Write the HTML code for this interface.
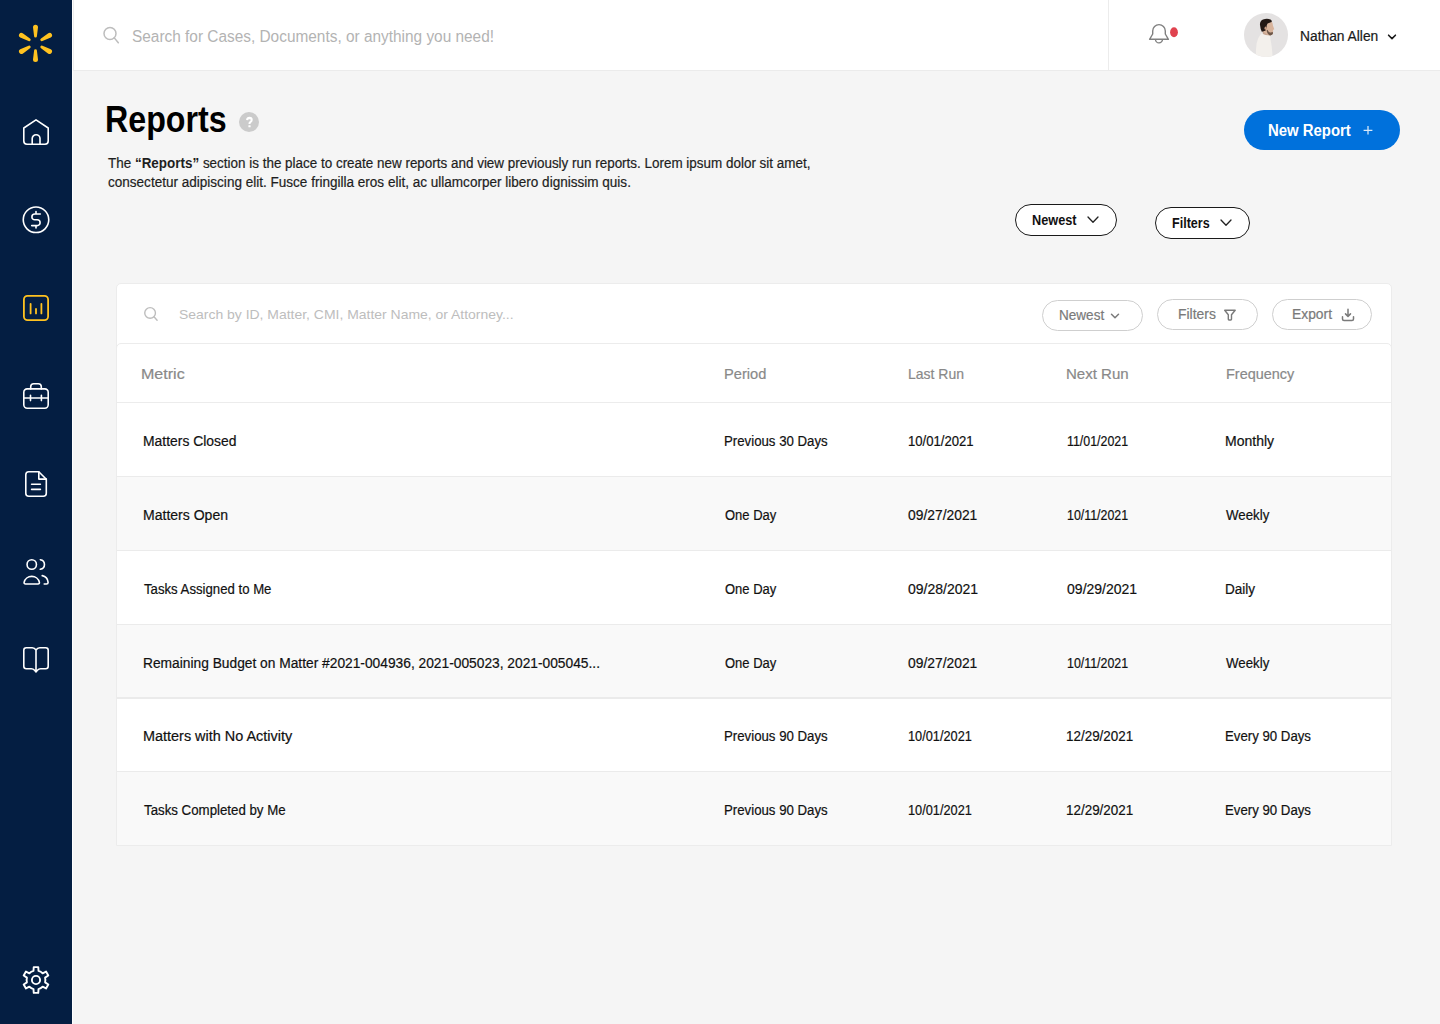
<!DOCTYPE html>
<html><head><meta charset="utf-8"><title>Reports</title>
<style>
*{margin:0;padding:0;box-sizing:border-box}
html,body{width:1440px;height:1024px;overflow:hidden}
body{background:#f5f5f5;font-family:"Liberation Sans",sans-serif;position:relative}
.t{position:absolute;white-space:nowrap;transform-origin:0 0;-webkit-text-stroke:0.2px currentColor}
.t b,.b7{-webkit-text-stroke:0}
.abs{position:absolute}
</style></head><body>
<div class="abs" style="left:0;top:0;width:72px;height:1024px;background:#041e42"></div>
<div class="abs" style="left:72px;top:0;width:1px;height:1024px;background:#fff"></div>
<div class="abs" style="left:73px;top:0;width:1px;height:70px;background:#ededed"></div>
<div class="abs" style="left:74px;top:0;width:1366px;height:70px;background:#fff"></div>
<div class="abs" style="left:73px;top:70px;width:1367px;height:1px;background:#ebebeb"></div>
<div class="abs" style="left:1108px;top:0;width:1px;height:70px;background:#ececec"></div>

<svg width="72" height="1024" style="position:absolute;left:0;top:0" viewBox="0 0 72 1024" fill="none">
 <g fill="#FFC220">
  <path transform="rotate(0 35.50 43.40)" d="M34.10,36.20 L33.00,27.20 A2.5,2.5 0 0 1 38.00,27.20 L36.90,36.20 A1.4,1.4 0 0 1 34.10,36.20 Z"/>
  <path transform="rotate(60 35.50 43.40)" d="M34.10,36.20 L33.00,27.20 A2.5,2.5 0 0 1 38.00,27.20 L36.90,36.20 A1.4,1.4 0 0 1 34.10,36.20 Z"/>
  <path transform="rotate(120 35.50 43.40)" d="M34.10,36.20 L33.00,27.20 A2.5,2.5 0 0 1 38.00,27.20 L36.90,36.20 A1.4,1.4 0 0 1 34.10,36.20 Z"/>
  <path transform="rotate(180 35.50 43.40)" d="M34.10,36.20 L33.00,27.20 A2.5,2.5 0 0 1 38.00,27.20 L36.90,36.20 A1.4,1.4 0 0 1 34.10,36.20 Z"/>
  <path transform="rotate(240 35.50 43.40)" d="M34.10,36.20 L33.00,27.20 A2.5,2.5 0 0 1 38.00,27.20 L36.90,36.20 A1.4,1.4 0 0 1 34.10,36.20 Z"/>
  <path transform="rotate(300 35.50 43.40)" d="M34.10,36.20 L33.00,27.20 A2.5,2.5 0 0 1 38.00,27.20 L36.90,36.20 A1.4,1.4 0 0 1 34.10,36.20 Z"/>
 </g>
 <g stroke="#FFFFFF" stroke-width="1.6" stroke-linecap="round" stroke-linejoin="round">
  <path d="M23.8,128 L36,119.9 L48.2,128 V141 Q48.2,144.2 45,144.2 H27 Q23.8,144.2 23.8,141 Z"/>
  <path d="M32.2,144.2 V138.6 A3.9,3.9 0 0 1 40,138.6 V144.2"/>
  <circle cx="36" cy="219.8" r="12.75"/>
  <path d="M40.3,214 H34.8 A2.9,2.9 0 0 0 34.8,219.8 H37.2 A2.9,2.9 0 0 1 37.2,225.6 H31.7 M36,211.6 V214 M36,225.6 V227.9"/>
 </g>
 <g stroke="#FFC220" stroke-width="1.8" stroke-linecap="round" stroke-linejoin="round">
  <rect x="23.9" y="295.9" width="24.2" height="24.2" rx="3.6"/>
  <path d="M30.6,303.8 V313.4 M36,309 V313.4 M41.4,303.8 V313.4"/>
 </g>
 <g stroke="#FFFFFF" stroke-width="1.6" stroke-linecap="round" stroke-linejoin="round">
  <rect x="23.8" y="388.9" width="24.4" height="19.3" rx="3.4"/>
  <path d="M30.7,388.9 V386.8 A3,3 0 0 1 33.7,383.8 H38.3 A3,3 0 0 1 41.3,386.8 V388.9"/>
  <path d="M23.8,398 H48.2 M30.5,395.3 V400.6 M41.4,395.3 V400.6"/>
  <path d="M38.8,471.8 H28.8 A3,3 0 0 0 25.8,474.8 V493.2 A3,3 0 0 0 28.8,496.2 H43.3 A3,3 0 0 0 46.3,493.2 V479.2 Z"/>
  <path d="M38.8,471.8 V479.1 H46.3 M31.6,484.3 H40.4 M31.6,489.4 H40.4"/>
  <circle cx="31.75" cy="564.5" r="4.7"/>
  <path d="M40.3,559.7 A4.85,4.85 0 0 1 40.3,569.3"/>
  <path d="M25.6,584 H38.0 Q39.6,584 39.4,582.3 A7.8,7.4 0 0 0 24.1,582.3 Q23.9,584 25.6,584 Z"/>
  <path d="M42.2,575.6 A7.2,7.6 0 0 1 48.1,582.4 Q48.1,584 46.4,584 H44.2"/>
  <path d="M36,650 Q34.6,647.8 32.2,647.8 H26.3 Q23.8,647.8 23.8,650.3 V666.3 Q23.8,668.8 26.3,668.8 H31.3 Q33.2,668.8 34.6,670.3 L36,671.9 L37.4,670.3 Q38.8,668.8 40.7,668.8 H45.7 Q48.2,668.8 48.2,666.3 V650.3 Q48.2,647.8 45.7,647.8 H39.8 Q37.4,647.8 36,650 Z M36,650 V671"/>
 </g>
 <g stroke="#FFFFFF" stroke-width="1.9" stroke-linecap="round" stroke-linejoin="round">
  <path d="M33.49,970.94 L33.73,967.10 L38.27,967.10 L38.51,970.94 A9.40,9.40 0 0 1 42.59,973.30 L46.04,971.58 L48.31,975.52 L45.10,977.65 A9.40,9.40 0 0 1 45.10,982.35 L48.31,984.48 L46.04,988.42 L42.59,986.70 A9.40,9.40 0 0 1 38.51,989.06 L38.27,992.90 L33.73,992.90 L33.49,989.06 A9.40,9.40 0 0 1 29.41,986.70 L25.96,988.42 L23.69,984.48 L26.90,982.35 A9.40,9.40 0 0 1 26.90,977.65 L23.69,975.52 L25.96,971.58 L29.41,973.30 A9.40,9.40 0 0 1 33.49,970.94 Z"/>
  <circle cx="36" cy="980" r="4.1"/>
 </g>
</svg>

<!-- header search icon -->
<svg class="abs" style="left:100px;top:25px" width="22" height="22" viewBox="0 0 22 22" fill="none" stroke="#bdbdbd" stroke-width="1.5" stroke-linecap="round">
 <circle cx="10" cy="8.5" r="6"/><path d="M14.3,12.9 L18.3,17.8"/>
</svg>
<!-- bell -->
<svg class="abs" style="left:1145px;top:20px" width="40" height="30" viewBox="1145 20 40 30" fill="none">
 <path d="M1152.7,34 V30.9 A6.3,6.3 0 0 1 1165.3,30.9 V34 L1168.4,39.3 H1149.6 Z" stroke="#808080" stroke-width="1.4" stroke-linejoin="round"/>
 <path d="M1155.5,39.4 A3.5,3.5 0 0 0 1162.5,39.4" stroke="#808080" stroke-width="1.4"/>
 <ellipse cx="1174" cy="32.2" rx="3.9" ry="5" fill="#e0434f"/>
</svg>
<!-- avatar -->
<svg class="abs" style="left:1244px;top:13px" width="44" height="44" viewBox="0 0 44 44">
 <defs><clipPath id="av"><circle cx="22" cy="22" r="22"/></clipPath></defs>
 <g clip-path="url(#av)">
  <rect width="44" height="44" fill="#e4e2e2"/>
  <path d="M17.6,20.2 Q21,21.8 25.6,22.6 Q26.6,24 26.4,26 Q28,33 28.6,44 H11.8 Q11.8,36 12.6,30.5 Q14,24 17.6,20.2 Z" fill="#f3f0ec"/>
  <path d="M18.2,17 L19,21 Q22,22.5 25,22.2 L24.5,19 Z" fill="#c7a591"/>
  <path d="M19.5,9 Q24,6.6 27.6,8.5 Q29,10.5 28.9,12.4 L30.3,16.3 L29,17 Q29.3,18.6 29,19.5 L29,21 Q27.5,22.6 25.5,22.4 Q21,21 19.5,18 Z" fill="#d8b49c"/>
  <path d="M16,12 Q15.6,8 19,6.4 Q23,5 26.5,6.4 Q28.2,7.3 27.6,9 Q25.5,9.6 23.6,10.4 Q22.4,12 22.6,14.6 L21.6,17.6 Q19.6,18.6 17.8,18.8 Q16.4,16 16,12 Z" fill="#231915"/>
  <path d="M22.6,17.6 Q23.4,21.6 26,22.4 Q28.6,22.4 29,20.6 L28.8,19 Q27,19.8 25.4,19.2 Q24,18.4 23.6,16.8 Z" fill="#5a463b" opacity="0.85"/>
  <ellipse cx="21.6" cy="15.2" rx="1.1" ry="1.6" fill="#c99d84"/>
 </g>
</svg>
<!-- name chevron -->
<svg class="abs" style="left:1386px;top:32px" width="12" height="10" viewBox="0 0 12 10" fill="none" stroke="#1a1a1a" stroke-width="1.6" stroke-linecap="round" stroke-linejoin="round">
 <path d="M2.6,3.2 L6,6.6 L9.4,3.2"/>
</svg>
<!-- help circle -->
<svg class="abs" style="left:239px;top:112px" width="20" height="20" viewBox="0 0 20 20"><circle cx="10" cy="10" r="10" fill="#cbcbcb"/><path d="M8.1,8.1 Q8.3,5.9 10.5,5.9 Q12.7,6 12.7,8 Q12.6,9.4 11.3,10.1 Q10.5,10.6 10.5,11.9" fill="none" stroke="#fff" stroke-width="2.1" stroke-linecap="butt"/><rect x="9.4" y="13.3" width="2.2" height="2" rx="0.3" fill="#fff"/></svg>
<!-- new report button -->
<div class="abs" style="left:1244px;top:110px;width:156px;height:40px;border-radius:20px;background:#0071dc"></div>
<svg class="abs" style="left:1360px;top:123px" width="16" height="16" viewBox="0 0 16 16" stroke="#fff" stroke-width="1.25" opacity="0.85">
 <path d="M8,2.9 V11.6 M3.6,7.25 H12.4"/>
</svg>
<!-- top pills -->
<div class="abs" style="left:1015px;top:204px;width:102px;height:32px;border-radius:16px;background:#fff;border:1.5px solid #1a1a1a"></div>
<svg class="abs" style="left:1085px;top:213px" width="16" height="14" viewBox="0 0 16 14" fill="none" stroke="#222" stroke-width="1.3" stroke-linecap="round" stroke-linejoin="round"><path d="M3,4 L8,9.3 L13,4"/></svg>
<div class="abs" style="left:1155px;top:207px;width:95px;height:32px;border-radius:16px;background:#fff;border:1.5px solid #1a1a1a"></div>
<svg class="abs" style="left:1218px;top:216px" width="16" height="14" viewBox="0 0 16 14" fill="none" stroke="#222" stroke-width="1.3" stroke-linecap="round" stroke-linejoin="round"><path d="M3,4 L8,9.3 L13,4"/></svg>
<!-- card search -->
<div class="abs" style="left:116px;top:283px;width:1276px;height:80px;border-radius:5px;background:#fff;border:1px solid #ececec"></div>
<svg class="abs" style="left:140px;top:303px" width="22" height="22" viewBox="0 0 22 22" fill="none" stroke="#bdbdbd" stroke-width="1.4" stroke-linecap="round">
 <circle cx="10.1" cy="9.95" r="5.35"/><path d="M14.2,14.1 L17.1,17.2"/>
</svg>
<div class="abs" style="left:1042px;top:300px;width:101px;height:31px;border-radius:16px;border:1px solid #cfcfcf"></div>
<svg class="abs" style="left:1107px;top:309px" width="16" height="14" viewBox="0 0 16 14" fill="none" stroke="#7a7a7a" stroke-width="1.5" stroke-linecap="round" stroke-linejoin="round"><path d="M4.5,5.3 L8,8.8 L11.5,5.3"/></svg>
<div class="abs" style="left:1157px;top:299px;width:101px;height:31px;border-radius:16px;border:1px solid #cfcfcf"></div>
<svg class="abs" style="left:1222px;top:307px" width="16" height="16" viewBox="0 0 16 16" fill="none" stroke="#7a7a7a" stroke-width="1.4" stroke-linejoin="round"><path d="M2.7,3.2 H13.2 L9.5,7.8 V12.3 Q9.5,13 8.8,13 H7 Q6.3,13 6.3,12.3 V7.8 Z"/></svg>
<div class="abs" style="left:1272px;top:299px;width:100px;height:31px;border-radius:16px;border:1px solid #cfcfcf"></div>
<svg class="abs" style="left:1340px;top:307px" width="16" height="16" viewBox="0 0 16 16" fill="none" stroke="#7a7a7a" stroke-width="1.5" stroke-linecap="round" stroke-linejoin="round"><path d="M8,2.3 V9.3 M5.5,6.9 L8,9.4 L10.5,6.9 M2.5,9.8 V12 A1.5,1.5 0 0 0 4,13.5 H12 A1.5,1.5 0 0 0 13.5,12 V9.8"/></svg>
<!-- table -->
<div class="abs" style="left:116px;top:343px;width:1276px;height:503px;border-radius:5px 5px 0 0;background:#fff;border:1px solid #ececec;overflow:hidden">
<div class="abs" style="left:0;top:58px;width:1274px;height:1px;background:#ececec"></div>
<div class="abs" style="left:0;top:59px;width:1274px;height:73px;background:#fff"></div>
<div class="abs" style="left:0;top:132px;width:1274px;height:1px;background:#ebebeb"></div>
<div class="abs" style="left:0;top:133px;width:1274px;height:73px;background:#f9f9f9"></div>
<div class="abs" style="left:0;top:206px;width:1274px;height:1px;background:#ebebeb"></div>
<div class="abs" style="left:0;top:207px;width:1274px;height:73px;background:#fff"></div>
<div class="abs" style="left:0;top:280px;width:1274px;height:1px;background:#ebebeb"></div>
<div class="abs" style="left:0;top:281px;width:1274px;height:73px;background:#f9f9f9"></div>
<div class="abs" style="left:0;top:353px;width:1274px;height:2px;background:#ebebeb"></div>
<div class="abs" style="left:0;top:355px;width:1274px;height:72px;background:#fff"></div>
<div class="abs" style="left:0;top:427px;width:1274px;height:1px;background:#ebebeb"></div>
<div class="abs" style="left:0;top:428px;width:1274px;height:73px;background:#f9f9f9"></div>
</div>
<div class="t b7" id="hsearch" style="left:132.04px;top:28.85px;font-size:16px;line-height:16px;font-weight:400;color:#b3b3b3;transform:scaleX(0.9623)">Search for Cases, Documents, or anything you need!</div>
<div class="t" id="hname" style="left:1300.04px;top:29.03px;font-size:14px;line-height:14px;font-weight:400;color:#1a1a1a;transform:scaleX(0.9860)">Nathan Allen</div>
<div class="t b7" id="title" style="left:104.50px;top:102.06px;font-size:36px;line-height:36px;font-weight:700;color:#000;transform:scaleX(0.8946)">Reports</div>
<div class="t" id="desc1" style="left:107.80px;top:156.19px;font-size:14px;line-height:14px;font-weight:400;color:#1e1e1e;transform:scaleX(0.9603)">The <b>“Reports”</b> section is the place to create new reports and view previously run reports. Lorem ipsum dolor sit amet,</div>
<div class="t" id="desc2" style="left:107.80px;top:174.78px;font-size:14px;line-height:14px;font-weight:400;color:#1e1e1e;transform:scaleX(0.9669)">consectetur adipiscing elit. Fusce fringilla eros elit, ac ullamcorper libero dignissim quis.</div>
<div class="t b7" id="newrep" style="left:1268.04px;top:122.90px;font-size:16px;line-height:16px;font-weight:700;color:#fff;transform:scaleX(0.9318)">New Report</div>
<div class="t b7" id="tnewest" style="left:1032.04px;top:212.74px;font-size:14px;line-height:14px;font-weight:700;color:#111;transform:scaleX(0.9086)">Newest</div>
<div class="t b7" id="tfilters" style="left:1172.04px;top:216.12px;font-size:14px;line-height:14px;font-weight:700;color:#111;transform:scaleX(0.8959)">Filters</div>
<div class="t b7" id="csearch" style="left:178.60px;top:308.18px;font-size:13px;line-height:13px;font-weight:400;color:#bdbdbd;transform:scaleX(1.0728)">Search by ID, Matter, CMI, Matter Name, or Attorney...</div>
<div class="t" id="cnewest" style="left:1058.60px;top:308.42px;font-size:14px;line-height:14px;font-weight:400;color:#7a7a7a;transform:scaleX(0.9679)">Newest</div>
<div class="t" id="cfilters" style="left:1177.60px;top:307.12px;font-size:14px;line-height:14px;font-weight:400;color:#7a7a7a;transform:scaleX(0.9938)">Filters</div>
<div class="t" id="cexport" style="left:1291.88px;top:306.53px;font-size:14px;line-height:14px;font-weight:400;color:#7a7a7a;transform:scaleX(0.9881)">Export</div>
<div class="t" id="th0" style="left:140.80px;top:366.00px;font-size:15px;line-height:15px;font-weight:400;color:#898989;transform:scaleX(1.0699)">Metric</div>
<div class="t" id="th1" style="left:723.88px;top:366.00px;font-size:15px;line-height:15px;font-weight:400;color:#898989;transform:scaleX(0.9762)">Period</div>
<div class="t" id="th2" style="left:908.00px;top:366.00px;font-size:15px;line-height:15px;font-weight:400;color:#898989;transform:scaleX(0.9320)">Last Run</div>
<div class="t" id="th3" style="left:1066.08px;top:366.00px;font-size:15px;line-height:15px;font-weight:400;color:#898989;transform:scaleX(1.0018)">Next Run</div>
<div class="t" id="th4" style="left:1225.80px;top:366.00px;font-size:15px;line-height:15px;font-weight:400;color:#898989;transform:scaleX(0.9641)">Frequency</div>
<div class="t" id="r0_0" style="left:142.80px;top:433.80px;font-size:14px;line-height:14px;font-weight:400;color:#111;transform:scaleX(0.9926)">Matters Closed</div>
<div class="t" id="r0_1" style="left:723.88px;top:433.80px;font-size:14px;line-height:14px;font-weight:400;color:#111;transform:scaleX(0.9450)">Previous 30 Days</div>
<div class="t" id="r0_2" style="left:907.80px;top:433.80px;font-size:14px;line-height:14px;font-weight:400;color:#111;transform:scaleX(0.9365)">10/01/2021</div>
<div class="t" id="r0_3" style="left:1066.88px;top:433.80px;font-size:14px;line-height:14px;font-weight:400;color:#111;transform:scaleX(0.8857)">11/01/2021</div>
<div class="t" id="r0_4" style="left:1225.04px;top:433.80px;font-size:14px;line-height:14px;font-weight:400;color:#111;transform:scaleX(1.0013)">Monthly</div>
<div class="t" id="r1_0" style="left:142.80px;top:507.80px;font-size:14px;line-height:14px;font-weight:400;color:#111;transform:scaleX(1.0025)">Matters Open</div>
<div class="t" id="r1_1" style="left:724.88px;top:507.80px;font-size:14px;line-height:14px;font-weight:400;color:#111;transform:scaleX(0.9276)">One Day</div>
<div class="t" id="r1_2" style="left:908.00px;top:507.80px;font-size:14px;line-height:14px;font-weight:400;color:#111;transform:scaleX(0.9887)">09/27/2021</div>
<div class="t" id="r1_3" style="left:1066.88px;top:507.80px;font-size:14px;line-height:14px;font-weight:400;color:#111;transform:scaleX(0.8857)">10/11/2021</div>
<div class="t" id="r1_4" style="left:1226.04px;top:507.80px;font-size:14px;line-height:14px;font-weight:400;color:#111;transform:scaleX(0.9483)">Weekly</div>
<div class="t" id="r2_0" style="left:143.80px;top:581.80px;font-size:14px;line-height:14px;font-weight:400;color:#111;transform:scaleX(0.9412)">Tasks Assigned to Me</div>
<div class="t" id="r2_1" style="left:724.88px;top:581.80px;font-size:14px;line-height:14px;font-weight:400;color:#111;transform:scaleX(0.9276)">One Day</div>
<div class="t" id="r2_2" style="left:908.00px;top:581.80px;font-size:14px;line-height:14px;font-weight:400;color:#111">09/28/2021</div>
<div class="t" id="r2_3" style="left:1067.08px;top:581.80px;font-size:14px;line-height:14px;font-weight:400;color:#111">09/29/2021</div>
<div class="t" id="r2_4" style="left:1225.04px;top:581.80px;font-size:14px;line-height:14px;font-weight:400;color:#111;transform:scaleX(0.9688)">Daily</div>
<div class="t" id="r3_0" style="left:142.80px;top:655.80px;font-size:14px;line-height:14px;font-weight:400;color:#111;transform:scaleX(0.9834)">Remaining Budget on Matter #2021-004936, 2021-005023, 2021-005045...</div>
<div class="t" id="r3_1" style="left:724.88px;top:655.80px;font-size:14px;line-height:14px;font-weight:400;color:#111;transform:scaleX(0.9276)">One Day</div>
<div class="t" id="r3_2" style="left:908.00px;top:655.80px;font-size:14px;line-height:14px;font-weight:400;color:#111;transform:scaleX(0.9887)">09/27/2021</div>
<div class="t" id="r3_3" style="left:1066.88px;top:655.80px;font-size:14px;line-height:14px;font-weight:400;color:#111;transform:scaleX(0.8857)">10/11/2021</div>
<div class="t" id="r3_4" style="left:1226.04px;top:655.80px;font-size:14px;line-height:14px;font-weight:400;color:#111;transform:scaleX(0.9483)">Weekly</div>
<div class="t" id="r4_0" style="left:142.80px;top:728.80px;font-size:14px;line-height:14px;font-weight:400;color:#111;transform:scaleX(1.0305)">Matters with No Activity</div>
<div class="t" id="r4_1" style="left:723.88px;top:728.80px;font-size:14px;line-height:14px;font-weight:400;color:#111;transform:scaleX(0.9450)">Previous 90 Days</div>
<div class="t" id="r4_2" style="left:907.80px;top:728.80px;font-size:14px;line-height:14px;font-weight:400;color:#111;transform:scaleX(0.9108)">10/01/2021</div>
<div class="t" id="r4_3" style="left:1066.08px;top:728.80px;font-size:14px;line-height:14px;font-weight:400;color:#111;transform:scaleX(0.9596)">12/29/2021</div>
<div class="t" id="r4_4" style="left:1225.04px;top:728.80px;font-size:14px;line-height:14px;font-weight:400;color:#111;transform:scaleX(0.9444)">Every 90 Days</div>
<div class="t" id="r5_0" style="left:143.80px;top:802.80px;font-size:14px;line-height:14px;font-weight:400;color:#111;transform:scaleX(0.9480)">Tasks Completed by Me</div>
<div class="t" id="r5_1" style="left:723.88px;top:802.80px;font-size:14px;line-height:14px;font-weight:400;color:#111;transform:scaleX(0.9450)">Previous 90 Days</div>
<div class="t" id="r5_2" style="left:907.80px;top:802.80px;font-size:14px;line-height:14px;font-weight:400;color:#111;transform:scaleX(0.9108)">10/01/2021</div>
<div class="t" id="r5_3" style="left:1066.08px;top:802.80px;font-size:14px;line-height:14px;font-weight:400;color:#111;transform:scaleX(0.9596)">12/29/2021</div>
<div class="t" id="r5_4" style="left:1225.04px;top:802.80px;font-size:14px;line-height:14px;font-weight:400;color:#111;transform:scaleX(0.9444)">Every 90 Days</div>
</body></html>
